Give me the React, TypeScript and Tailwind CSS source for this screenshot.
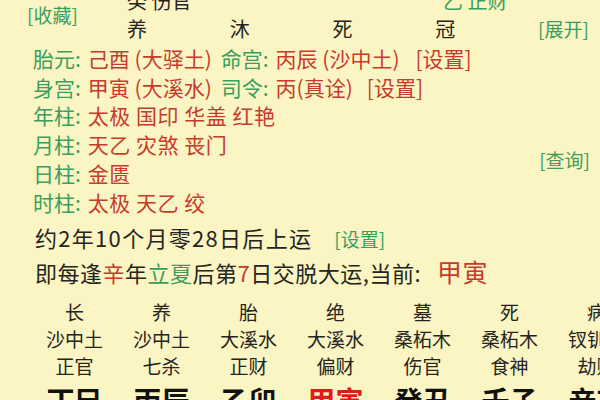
import React from "react";

const green = "text-[#3a9e5e]";
const red = "text-[#c63b2e]";

const topCols = ["养", "沐", "死", "冠"];

const pillars = [
  { stage: "长", nayin: "沙中土", god: "正官", gz: "丁巳" },
  { stage: "养", nayin: "沙中土", god: "七杀", gz: "丙辰" },
  { stage: "胎", nayin: "大溪水", god: "正财", gz: "乙卯" },
  { stage: "绝", nayin: "大溪水", god: "偏财", gz: "甲寅", current: true },
  { stage: "墓", nayin: "桑柘木", god: "伤官", gz: "癸丑" },
  { stage: "死", nayin: "桑柘木", god: "食神", gz: "壬子" },
  { stage: "病", nayin: "钗钏金", god: "劫财", gz: "辛亥" },
];

const shensha = [
  { label: "年柱", items: "太极 国印 华盖 红艳" },
  { label: "月柱", items: "天乙 灾煞 丧门" },
  { label: "日柱", items: "金匮" },
  { label: "时柱", items: "太极 天乙 绞" },
];

function Label({ children }: { children: React.ReactNode }) {
  return <span className={`${green} mr-[7px]`}>{children}:</span>;
}

export default function App() {
  return (
    <div className="w-[600px] h-[400px] overflow-hidden bg-[#faf5c3] text-[#262420] font-['Noto_Sans_CJK_SC','Noto_Sans',sans-serif]">
      {/* header: hidden stem row + growth stages */}
      <div className="flex -mt-[13px] h-[56px]">
        <div className="w-[127px] shrink-0 pl-[27px] pt-[16px]">
          <span className={`${green} text-[19px] leading-[24px] whitespace-nowrap`}>[收藏]</span>
        </div>
        <div className="w-[411px] shrink-0 flex flex-col text-[20px]">
          <div className="flex h-[28px] leading-[28px] whitespace-nowrap">
            <span className="w-[316px]">癸 伤官</span>
            <span className={green}>乙 正财</span>
          </div>
          <div className="flex h-[28px] leading-[28px]">
            {topCols.map((c) => (
              <span key={c} className="w-[105px]">
                {c}
              </span>
            ))}
          </div>
        </div>
        <div className="pt-[28px]">
          <span className={`${green} text-[19px] leading-[28px] whitespace-nowrap`}>[展开]</span>
        </div>
      </div>

      {/* info lines */}
      <div className="flex mt-[1px]">
        <div className="pl-[33px] text-[21px] leading-[28.7px] whitespace-nowrap">
          <div>
            <Label>胎元</Label>
            <span className={red}>己酉 (大驿土)</span>
            <span className="ml-[9px]">
              <Label>命宫</Label>
            </span>
            <span className={red}>丙辰 (沙中土)</span>
            <span className={`${red} ml-[16px]`}>[设置]</span>
          </div>
          <div>
            <Label>身宫</Label>
            <span className={red}>甲寅 (大溪水)</span>
            <span className="ml-[9px]">
              <Label>司令</Label>
            </span>
            <span className={red}>丙(真诠)</span>
            <span className={`${red} ml-[14px]`}>[设置]</span>
          </div>
          {shensha.map((s) => (
            <div key={s.label}>
              <Label>{s.label}</Label>
              <span className={`${red} tracking-[0.5px]`}>{s.items}</span>
            </div>
          ))}
        </div>
        <div className="ml-auto pr-[10px] pt-[102px]">
          <span className={`${green} text-[19px] leading-[28.7px] whitespace-nowrap`}>[查询]</span>
        </div>
      </div>

      {/* luck start */}
      <div className="mt-[5px] pl-[35px] text-[22px] leading-[33px] whitespace-nowrap">
        <div>
          <span className="tracking-[1.3px]">约2年10个月零28日后上运</span>
          <span className={`${green} text-[19px] ml-[22px]`}>[设置]</span>
        </div>
        <div className="tracking-[0.5px]">
          即每逢<span className={red}>辛</span>年<span className={green}>立夏</span>后第
          <span className={red}>7</span>日交脱大运,当前:
          <span className={`${red} text-[25px] ml-[16px]`}>甲寅</span>
        </div>
      </div>

      {/* luck pillars */}
      <div className="flex pl-[31px] mt-[9px]">
        {pillars.map((p) => (
          <div key={p.gz} className="w-[87px] shrink-0 flex flex-col items-center whitespace-nowrap">
            <span className="text-[19px] leading-[27px]">{p.stage}</span>
            <span className="text-[19px] leading-[27px]">{p.nayin}</span>
            <span className="text-[19px] leading-[27px]">{p.god}</span>
            <span
              className={`mt-[5px] text-[28px] leading-[32px] font-bold ${
                p.current ? "text-[#e01b1b]" : "text-[#111]"
              }`}
            >
              {p.gz}
            </span>
          </div>
        ))}
      </div>
    </div>
  );
}
